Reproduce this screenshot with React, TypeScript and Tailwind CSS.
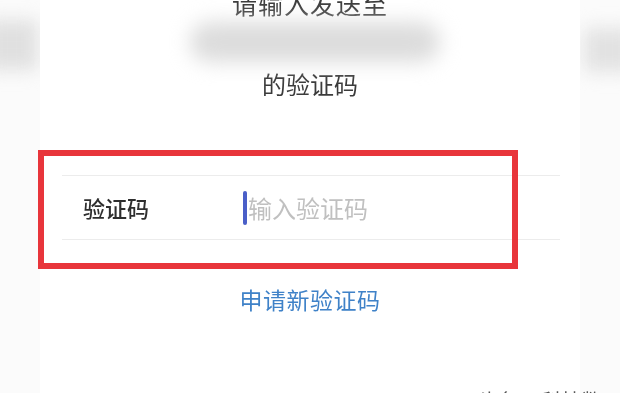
import React from "react";

const FONT = { fontFamily: '"Noto Sans CJK SC", "Noto Sans", sans-serif' };

export default function App() {
  return (
    <div
      className="relative w-[620px] h-[393px] overflow-hidden bg-[#fbfbfb] text-[#333]"
      style={FONT}
    >
      {/* side shadows from the page behind */}
      <div className="absolute left-[-14px] top-[20px] w-[52px] h-[50px] bg-[#e0e0e0] blur-[9px]" />
      <div className="absolute right-[-14px] top-[28px] w-[50px] h-[44px] bg-[#e2e2e2] blur-[9px]" />

      <div className="relative mx-[40px] h-full bg-white blur-[0.5px]">
        {/* header */}
        <div className="relative flex flex-col items-center h-[150px]">
          <p className="-mt-[14px] text-[25px] leading-[34px] tracking-[1px] text-[#3b3b3b]">
            请输入发送至
          </p>
          <div className="absolute left-[150px] top-[22px] w-[250px] h-[40px] rounded-full bg-[#dcdcdc] blur-[10px]" />
          <p className="mt-[48px] text-[24px] leading-[32px] text-[#3b3b3b]">的验证码</p>
        </div>

        {/* form row */}
        <div className="ml-[22px] mr-[20px] mt-[25px] border-t border-b border-[#ececec] h-[65px] flex items-center">
          <span className="w-[181px] pl-[21px] text-[22px] font-medium text-[#2e2e2e]">验证码</span>
          <div className="flex items-center">
            <span className="w-[4px] h-[34px] rounded-sm bg-[#4a5fc8]" />
            <span className="ml-[1px] text-[24px] text-[#c0c0c0]">输入验证码</span>
          </div>
        </div>

        {/* link */}
        <div className="mt-[42px] flex justify-center">
          <span className="text-[23px] tracking-[0.5px] text-[#3f82c8]">申请新验证码</span>
        </div>
      </div>

      {/* red annotation */}
      <div className="absolute left-[38px] top-[150px] w-[480px] h-[119px] border-[6px] border-[#e8353b] blur-[0.4px]" />

      {/* watermark, cut off at the bottom */}
      <div className="absolute left-[478px] top-[389px] text-[20px] leading-[24px] text-[#555] blur-[0.6px]">
        头条 @科技数码
      </div>
    </div>
  );
}
